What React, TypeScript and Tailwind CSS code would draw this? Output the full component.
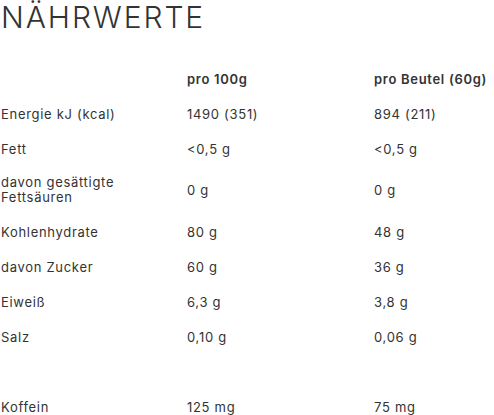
import React from 'react';

const rows: [string, string, string][] = [
  ['Energie kJ (kcal)', '1490 (351)', '894 (211)'],
  ['Fett', '<0,5 g', '<0,5 g'],
  ['davon gesättigte Fettsäuren', '0 g', '0 g'],
  ['Kohlenhydrate', '80 g', '48 g'],
  ['davon Zucker', '60 g', '36 g'],
  ['Eiweiß', '6,3 g', '3,8 g'],
  ['Salz', '0,10 g', '0,06 g'],
  ['', '', ''],
  ['Koffein', '125 mg', '75 mg'],
];

export default function App() {
  return (
    <div className="w-[494px] h-[415px] overflow-hidden bg-white text-[#333333] font-['Inter',sans-serif]">
      <h2 className="pl-[1px] pt-[1px] text-[30px] leading-[32px] font-light tracking-[1.9px]">NÄHRWERTE</h2>
      <table className="mt-[28px] w-full border-collapse text-[13px] leading-[14px] tracking-[0.7px]">
        <colgroup>
          <col className="w-[186px]" />
          <col className="w-[187px]" />
          <col />
        </colgroup>
        <thead>
          <tr className="h-[35px]">
            <th></th>
            <th className="pl-[1px] text-left font-semibold">pro 100g</th>
            <th className="pl-[1px] text-left font-semibold">pro Beutel (60g)</th>
          </tr>
        </thead>
        <tbody>
          {rows.map((r, i) => (
            <tr key={i} className="h-[35px]">
              {r[0] === 'davon gesättigte Fettsäuren' ? (
                <td className="pl-[1px] py-[9px] pr-2 leading-[15px]">
                  davon gesättigte<br />Fettsäuren
                </td>
              ) : (
                <td className="pl-[1px] py-[10px] pr-2">{r[0]}</td>
              )}
              <td className="pl-[1px]">{r[1]}</td>
              <td className="pl-[1px]">{r[2]}</td>
            </tr>
          ))}
        </tbody>
      </table>
    </div>
  );
}
